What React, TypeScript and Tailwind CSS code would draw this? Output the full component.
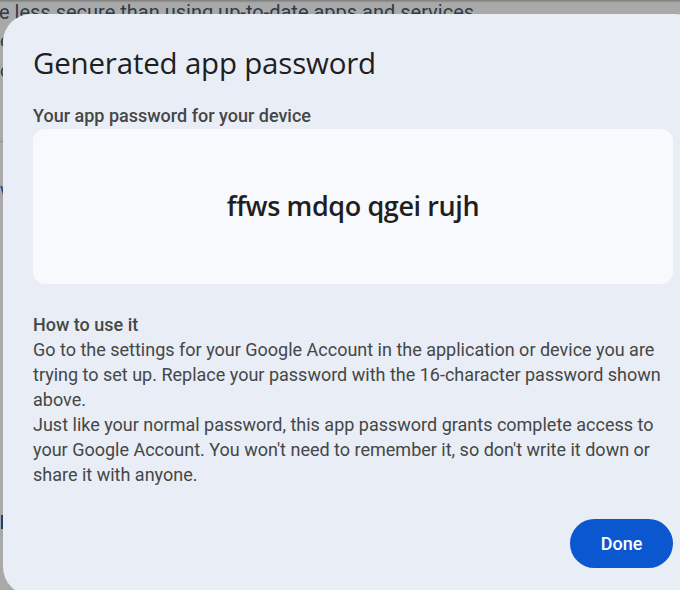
import React from "react";

const bodyFont = { fontFamily: "Roboto, 'Liberation Sans', sans-serif" };
const headFont = { fontFamily: "'Open Sans', Roboto, sans-serif" };

// page behind the dialog, dimmed by the scrim
function BackgroundPage() {
  return (
    <div className="w-[680px] h-[590px] bg-[#a9a9a9] overflow-hidden text-[#2f3a48]" style={bodyFont}>
      <div className="h-[3px] bg-gradient-to-b from-[#7d7d7d] to-[#a9a9a9]" />
      <div className="flex flex-col whitespace-nowrap">
        <p className="text-[20px] leading-[24px] -mt-[3px] -ml-[1px]">e less secure than using up-to-date apps and services.</p>
        <p className="text-[18px] leading-[30px] mt-[2px]">e</p>
        <p className="text-[18px] leading-[30px]">c</p>
        <div className="mt-[55px] w-[4px] h-px bg-[#8f8f8f]" />
        <p className="mt-[36px] text-[18px] leading-[24px] text-[#0b3f8f]">w</p>
        <div className="mt-[313px] ml-[1px] w-[2px] h-[14px] bg-[#1f3f7a]" />
      </div>
    </div>
  );
}

export default function App() {
  return (
    <div className="relative w-[680px] h-[590px] overflow-hidden">
      <BackgroundPage />

      <div className="absolute left-[3px] top-[14px] w-[700px] h-[581px] bg-[#e9edf6] rounded-[28px] px-[30px] pt-[26px] flex flex-col">
        <h1 className="text-[29.5px] leading-[46px] text-[#1f1f1f] font-normal tracking-[-0.2px]" style={headFont}>
          Generated app password
        </h1>

        <p className="mt-[18px] text-[18px] leading-[24px] font-medium text-[#444746]" style={bodyFont}>
          Your app password for your device
        </p>

        <div className="mt-[1px] h-[155px] w-[640px] bg-[#f8f9fd] rounded-[12px] flex items-center justify-center">
          <span className="text-[27px] font-semibold text-[#1f1f1f] tracking-[-0.4px]" style={headFont}>
            ffws mdqo qgei rujh
          </span>
        </div>

        <div className="mt-[28px] w-[640px] text-[18px] leading-[25px] text-[#444746]" style={bodyFont}>
          <p className="font-medium">How to use it</p>
          <p>
            Go to the settings for your Google Account in the application or device you are trying to set up. Replace your password with the 16-character password shown above.
          </p>
          <p>
            Just like your normal password, this app password grants complete access to your Google Account. You won't need to remember it, so don't write it down or share it with anyone.
          </p>
        </div>

        <div className="mt-[32px] w-[640px] flex justify-end">
          <button
            className="h-[49px] w-[103px] rounded-full bg-[#0b57d0] text-white text-[18px] font-medium"
            style={bodyFont}
          >
            Done
          </button>
        </div>
      </div>
    </div>
  );
}
